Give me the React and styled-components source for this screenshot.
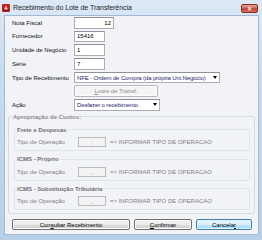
import React from 'react';
import styled, { createGlobalStyle } from 'styled-components';

const Global = createGlobalStyle`
    body {
        margin: 0;
        background: #ffffff;
    }
    * {
        box-sizing: border-box;
    }
`;

const Window = styled.div`
    width: 262px;
    height: 240px;
    display: flex;
    flex-direction: column;
    background: linear-gradient(180deg, #dce8f6 0%, #c9dbef 30%, #b8cfe9 100%);
    font-family: 'Liberation Sans', Arial, sans-serif;
    font-size: 6px;
    color: #000;
`;

const TitleBar = styled.div`
    height: 15px;
    display: flex;
    align-items: center;
    padding-left: 2px;
    gap: 3px;
`;

const AppIcon = styled.svg`
    width: 8px;
    height: 8px;
    flex: none;
`;

const Title = styled.span`
    font-size: 7px;
    color: #1e1e1e;
    letter-spacing: -0.05px;
`;

const CloseBtn = styled.div`
    margin-left: auto;
    margin-right: 4px;
    align-self: flex-start;
    margin-top: 4px;
    width: 17px;
    height: 9px;
    border: 1px solid #8a2a22;
    border-radius: 2px;
    background: linear-gradient(180deg, #e8a99a 0%, #d1675a 45%, #c0392b 55%, #d77b60 100%);
    display: flex;
    align-items: center;
    justify-content: center;
    color: #fff;
    font-size: 7px;
    font-weight: bold;
    line-height: 1;
`;

const Client = styled.div`
    flex: 1;
    margin: 0 3px 5px 4px;
    background: #f2f3f7;
    border: 1px solid #a3b7d0;
    padding: 1px 0 0 0;
    display: flex;
    flex-direction: column;
`;

const Form = styled.div`
    display: grid;
    grid-template-columns: 62px auto;
    grid-auto-rows: 11.5px;
    row-gap: 2.2px;
    align-items: center;
    padding-left: 7px;
`;

const Label = styled.span`
    white-space: nowrap;
    color: #111;
`;

const Field = styled.div`
    width: ${p => p.w}px;
    height: 11.5px;
    background: #fff;
    border: 1px solid #abadb3;
    border-top-color: #8e9197;
    display: flex;
    align-items: center;
    justify-content: ${p => (p.right ? 'flex-end' : 'flex-start')};
    padding: 0 2px;
    color: #000;
    white-space: nowrap;
    overflow: hidden;
`;

const Select = styled(Field)`
    justify-content: space-between;
    color: #24246e;
    padding-right: 1px;
    letter-spacing: -0.12px;
`;

const Arrow = styled.span`
    flex: none;
    width: 0;
    height: 0;
    border-left: 2.5px solid transparent;
    border-right: 2.5px solid transparent;
    border-top: 3px solid #000;
    margin-right: 1px;
`;

const Button = styled.div`
    width: ${p => p.w}px;
    height: ${p => p.h || 11.5}px;
    border: 1px solid ${p => (p.disabled ? '#b5b9bd' : p.focused ? '#3c7fb1' : '#707070')};
    border-radius: 2px;
    background: ${p => (p.disabled
        ? '#f4f4f4'
        : p.focused
            ? 'linear-gradient(180deg, #eaf6fd 0%, #d9f0fc 50%, #bee6fd 51%, #a7d9f5 100%)'
            : 'linear-gradient(180deg, #f2f2f2 0%, #ebebeb 50%, #dddddd 51%, #cfcfcf 100%)')};
    box-shadow: ${p => (p.focused ? 'inset 0 0 0 1px #dff3ff' : 'inset 0 0 0 1px #fcfcfc')};
    color: ${p => (p.disabled ? '#8b8b8b' : '#000')};
    display: flex;
    align-items: center;
    justify-content: center;
    white-space: nowrap;
`;

const Group = styled.fieldset`
    margin: 2.3px 3px 0 3px;
    border: 1px solid #d3dbe2;
    border-radius: 3px;
    padding: 5px 4px 3px 3px;
    display: flex;
    flex-direction: column;
    gap: 4px;
`;

const GroupTitle = styled.legend`
    padding: 0 1px;
    font-weight: bold;
    color: ${p => p.color || '#8a8a8a'};
    line-height: 8px;
`;

const SubGroup = styled.fieldset`
    margin: 0 0 0 2px;
    border: 1px solid #dde3e8;
    border-radius: 3px;
    padding: 3.5px 1px 3px 1px;
`;

const OpRow = styled.div`
    display: flex;
    align-items: center;
    height: 10px;
    padding-left: 1px;
    color: #808080;
`;

const OpLabel = styled.span`
    width: 61px;
`;

const OpInput = styled.div`
    width: 28px;
    height: 10px;
    border: 1px solid #b8bcc0;
    background: #f3f3f3;
    display: flex;
    align-items: center;
    justify-content: center;
    color: #666;
    margin-right: 4px;
`;

const ButtonRow = styled.div`
    display: flex;
    gap: 4px;
    padding-left: 7px;
    margin-top: 4.5px;
`;

const subgroups = ['Frete e Despesas', 'ICMS - Próprio', 'ICMS - Substituição Tributária'];

export default function App() {
    return (
        <>
            <Global />
            <Window>
                <TitleBar>
                    <AppIcon viewBox="0 0 8 8">
                        <rect x="0" y="0" width="8" height="8" rx="1" fill="#c8201c" />
                        <path d="M2 6 L4 1.5 L6 6 Z" fill="#fff" opacity="0.85" />
                        <rect x="1" y="5.5" width="6" height="1.5" fill="#7a0f0c" />
                    </AppIcon>
                    <Title>Recebimento do Lote de Transferência</Title>
                    <CloseBtn>×</CloseBtn>
                </TitleBar>
                <Client>
                    <Form>
                        <Label>Nota Fiscal</Label>
                        <Field w={40} right>12</Field>
                        <Label>Fornecedor</Label>
                        <Field w={31}>15416</Field>
                        <Label>Unidade de Negócio</Label>
                        <Field w={31}>1</Field>
                        <Label>Série</Label>
                        <Field w={31}>7</Field>
                        <Label>Tipo de Recebimento</Label>
                        <Select w={146}>
                            <span>NFE - Ordem de Compra (da própria Uni.Negócio)</span>
                            <Arrow />
                        </Select>
                        <span />
                        <Button w={84} disabled><span><u>L</u>otes de Transf.</span></Button>
                        <Label>Ação</Label>
                        <Select w={86}>
                            <span>Desfazer o recebimento</span>
                            <Arrow />
                        </Select>
                    </Form>
                    <Group>
                        <GroupTitle>Apropriação de Custos:</GroupTitle>
                        {subgroups.map(name => (
                            <SubGroup key={name}>
                                <GroupTitle color="#707070">{name}</GroupTitle>
                                <OpRow>
                                    <OpLabel>Tipo de Operação</OpLabel>
                                    <OpInput>,</OpInput>
                                    <span>=&gt; INFORMAR TIPO DE OPERACAO</span>
                                </OpRow>
                            </SubGroup>
                        ))}
                    </Group>
                    <ButtonRow>
                        <Button w={118}><span>Con<u>s</u>ultar Recebimento</span></Button>
                        <Button w={58}><span><u>C</u>onfirmar</span></Button>
                        <Button w={56} focused><span>Cancela<u>r</u></span></Button>
                    </ButtonRow>
                </Client>
            </Window>
        </>
    );
}
